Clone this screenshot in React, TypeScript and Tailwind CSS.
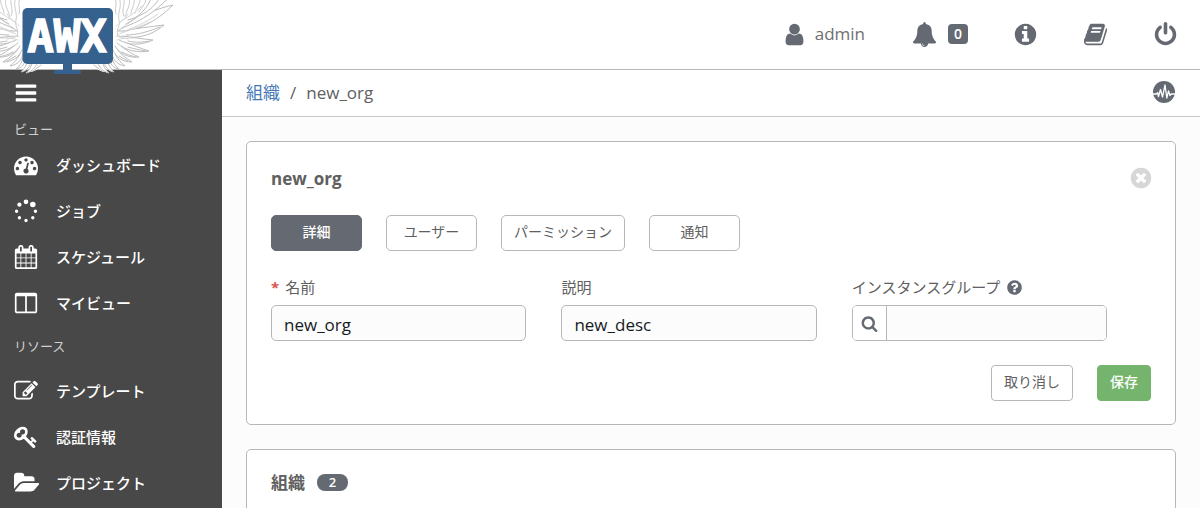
import { useState } from 'react';
import type { ReactNode } from 'react';

interface IconProps {
  className: string;
  name: keyof typeof ICONS;
}

const CIRCLE =
  'm0 0q0 209-103 385.5t-279.5 279.5-385.5 103-385.5-103-279.5-279.5-103-385.5 103-385.5 279.5-279.5 385.5-103 385.5 103 279.5 279.5 103 385.5z';

const ICONS = {
  bars: 'M192 256h1408q64 0 64 64v128q0 64-64 64h-1408q-64 0-64-64v-128q0-64 64-64zM192 768h1408q64 0 64 64v128q0 64-64 64h-1408q-64 0-64-64v-128q0-64 64-64zM192 1280h1408q64 0 64 64v128q0 64-64 64h-1408q-64 0-64-64v-128q0-64 64-64z',
  user: 'M1536 1399q0 109-62.5 187t-150.5 78h-854q-88 0-150.5-78t-62.5-187q0-85 8.5-160.5t31.5-152 58.5-131 94-89 134.5-34.5q131 128 313 128t313-128q76 0 134.5 34.5t94 89 58.5 131 31.5 152 8.5 160.5zm-256-887q0 159-112.5 271.5t-271.5 112.5-271.5-112.5-112.5-271.5 112.5-271.5 271.5-112.5 271.5 112.5 112.5 271.5z',
  bell: 'M912 1696q0-16-16-16-59 0-101.5-42.5t-42.5-101.5q0-16-16-16t-16 16q0 73 51.5 124.5t124.5 51.5q16 0 16-16zm816-288q0 52-38 90t-90 38h-448q0 106-75 181t-181 75-181-75-75-181h-448q-52 0-90-38t-38-90q50-42 91-88t85-119.5 74.5-158.5 50-206 19.5-260q0-152 117-282.5t307-158.5q-8-19-8-39 0-40 28-68t68-28 68 28 28 68q0 20-8 39 190 28 307 158.5t117 282.5q0 139 19.5 260t50 206 74.5 158.5 85 119.5 91 88z',
  info:
    'M1152 1376v-160q0-14-9-23t-23-9h-96v-512q0-14-9-23t-23-9h-320q-14 0-23 9t-9 23v160q0 14 9 23t23 9h96v320h-96q-14 0-23 9t-9 23v160q0 14 9 23t23 9h448q14 0 23-9t9-23zm-128-896v-160q0-14-9-23t-23-9h-192q-14 0-23 9t-9 23v160q0 14 9 23t23 9h192q14 0 23-9t9-23zM1664 896' + CIRCLE,
  book: 'M1703 478q40 57 18 129l-275 906q-19 64-76.5 107.5t-122.5 43.5h-923q-77 0-148.5-53.5t-99.5-131.5q-24-67-2-127 0-4 3-27t4-37q1-8-3-21.5t-3-19.5q2-11 8-21t16.5-23.5 16.5-23.5q23-38 45-91.5t30-91.5q3-10 .5-30t-.5-28q3-11 17-28t17-23q21-36 42-92t25-90q1-9-2.5-32t.5-28q4-13 22-30.5t22-22.5q19-26 42.5-84.5t27.5-96.5q1-8-3-25.5t-2-26.5q2-8 9-18t18-23 17-21q8-12 16.5-30.5t15-35 16-36 19.5-32 26.5-23.5 36-11.5 47.5 5.5l-1 3q38-9 51-9h761q74 0 114 56t18 130l-274 906q-36 119-71.5 153.5t-128.5 34.5h-869q-27 0-38 15-11 16-1 43 24 70 144 70h923q29 0 56-15.5t35-41.5l300-987q7-22 5-57 38 15 59 43zm-1064 2q-4 13 2 22.5t20 9.5h608q13 0 25.5-9.5t16.5-22.5l21-64q4-13-2-22.5t-20-9.5h-608q-13 0-25.5 9.5t-16.5 22.5zm-83 256q-4 13 2 22.5t20 9.5h608q13 0 25.5-9.5t16.5-22.5l21-64q4-13-2-22.5t-20-9.5h-608q-13 0-25.5 9.5t-16.5 22.5z',
  power:
    'M1664 896q0 156-61 298t-164 245-245 164-298 61-298-61-245-164-164-245-61-298q0-182 80.5-343t226.5-270q43-32 95.5-25t83.5 50q32 42 24.5 94.5t-49.5 84.5q-98 74-151.5 181t-53.5 228q0 104 40.5 198.5t109.5 163.5 163.5 109.5 198.5 40.5 198.5-40.5 163.5-109.5 109.5-163.5 40.5-198.5q0-121-53.5-228t-151.5-181q-42-32-49.5-84.5t24.5-94.5q31-43 84-50t95 25q146 109 226.5 270t80.5 343zm-640-768v640q0 52-38 90t-90 38-90-38-38-90v-640q0-52 38-90t90-38 90 38 38 90z',
  dashboard:
    'M384 1152q0-53-37.5-90.5t-90.5-37.5-90.5 37.5-37.5 90.5 37.5 90.5 90.5 37.5 90.5-37.5 37.5-90.5zm192-448q0-53-37.5-90.5t-90.5-37.5-90.5 37.5-37.5 90.5 37.5 90.5 90.5 37.5 90.5-37.5 37.5-90.5zm428 481l101-382q6-26-7.5-48.5t-38.5-29.5-48 6.5-30 39.5l-101 382q-60 5-107 43.5t-63 98.5q-20 77 20 146t117 89 146-20 89-117q16-60-6-117t-72-91zm660-33q0-53-37.5-90.5t-90.5-37.5-90.5 37.5-37.5 90.5 37.5 90.5 90.5 37.5 90.5-37.5 37.5-90.5zm-640-640q0-53-37.5-90.5t-90.5-37.5-90.5 37.5-37.5 90.5 37.5 90.5 90.5 37.5 90.5-37.5 37.5-90.5zm448 192q0-53-37.5-90.5t-90.5-37.5-90.5 37.5-37.5 90.5 37.5 90.5 90.5 37.5 90.5-37.5 37.5-90.5zm320 448q0 261-141 483-19 29-54 29h-1402q-35 0-54-29-141-221-141-483 0-182 71-348t191-286 286-191 348-71 348 71 286 191 191 286 71 348z',
  spinner:
    'M896 32a176 176 0 1 0 0 352a176 176 0 1 0 0-352zM1404 196a208 208 0 1 0 0 416a208 208 0 1 0 0-416zM404 260a160 160 0 1 0 0 320a160 160 0 1 0 0-320zM192 784a128 128 0 1 0 0 256a128 128 0 1 0 0-256zM1600 784a128 128 0 1 0 0 256a128 128 0 1 0 0-256zM404 1276a128 128 0 1 0 0 256a128 128 0 1 0 0-256zM1404 1276a128 128 0 1 0 0 256a128 128 0 1 0 0-256zM896 1480a128 128 0 1 0 0 256a128 128 0 1 0 0-256z',
  calendar:
    'M192 1664h288v-288h-288v288zm352 0h320v-288h-320v288zm-352-352h288v-320h-288v320zm352 0h320v-320h-320v320zm-352-384h288v-288h-288v288zm736 736h320v-288h-320v288zm-384-736h320v-288h-320v288zm768 736h288v-288h-288v288zm-384-352h320v-320h-320v320zm-352-864v-288q0-13-9.5-22.5t-22.5-9.5h-64q-13 0-22.5 9.5t-9.5 22.5v288q0 13 9.5 22.5t22.5 9.5h64q13 0 22.5-9.5t9.5-22.5zm736 864h288v-320h-288v320zm-384-384h320v-288h-320v288zm384 0h288v-288h-288v288zm32-480v-288q0-13-9.5-22.5t-22.5-9.5h-64q-13 0-22.5 9.5t-9.5 22.5v288q0 13 9.5 22.5t22.5 9.5h64q13 0 22.5-9.5t9.5-22.5zm384-64v1280q0 52-38 90t-90 38h-1408q-52 0-90-38t-38-90v-1280q0-52 38-90t90-38h128v-96q0-66 47-113t113-47h64q66 0 113 47t47 113v96h384v-96q0-66 47-113t113-47h64q66 0 113 47t47 113v96h128q52 0 90 38t38 90z',
  columns:
    'M224 1536h608v-1152h-640v1120q0 13 9.5 22.5t22.5 9.5zm1376-32v-1120h-640v1152h608q13 0 22.5-9.5t9.5-22.5zm128-1216v1216q0 66-47 113t-113 47h-1344q-66 0-113-47t-47-113v-1216q0-66 47-113t113-47h1344q66 0 113 47t47 113z',
  edit: 'M888 1184l116-116-152-152-116 116v56h96v96h56zm440-720q-16-16-33 1l-350 350q-17 17-1 33t33-1l350-350q17-17 1-33zm80 594v190q0 119-84.5 203.5t-203.5 84.5h-832q-119 0-203.5-84.5t-84.5-203.5v-832q0-119 84.5-203.5t203.5-84.5h832q63 0 117 25 15 7 18 23 3 17-9 29l-49 49q-14 14-32 8-23-6-45-6h-832q-66 0-113 47t-47 113v832q0 66 47 113t113 47h832q66 0 113-47t47-113v-126q0-13 9-22l64-64q15-15 35-7t20 29zm-96-738l288 288-672 672h-288v-288zm444 132l-92 92-288-288 92-92q28-28 68-28t68 28l152 152q28 28 28 68t-28 68z',
  key: 'M832 512q0-80-56-136t-136-56-136 56-56 136q0 42 19 83-41-19-83-19-80 0-136 56t-56 136 56 136 136 56 136-56 56-136q0-42-19-83 41 19 83 19 80 0 136-56t56-136zm851 704q0 17-49 66t-66 49q-9 0-28.5-16t-36.5-33-38.5-40-24.5-26l-96 96 220 220q28 28 28 68 0 42-39 81t-81 39q-40 0-68-28l-671-671q-176 131-365 131-163 0-265.5-102.5t-102.5-265.5q0-160 95-313t248-248 313-95q163 0 265.5 102.5t102.5 265.5q0 189-131 365l355 355 96-96q-3-3-26-24.5t-40-38.5-33-36.5-16-28.5q0-17 49-66t66-49q13 0 23 10 6 6 46 44.5t82 79.5 86.5 86 73 78 28.5 41z',
  folder:
    'M1879 952q0 31-31 66l-336 396q-43 51-120.5 86.5t-143.5 35.5h-1088q-34 0-60.5-13t-26.5-43q0-31 31-66l336-396q43-51 120.5-86.5t143.5-35.5h1088q34 0 60.5 13t26.5 43zm-343-344v160h-832q-94 0-197 47.5t-164 119.5l-337 396-5 6q0-4-.5-12.5t-.5-12.5v-960q0-92 66-158t158-66h320q92 0 158 66t66 158v32h544q92 0 158 66t66 158z',
  search:
    'M1216 832q0-185-131.5-316.5t-316.5-131.5-316.5 131.5-131.5 316.5 131.5 316.5 316.5 131.5 316.5-131.5 131.5-316.5zm512 832q0 52-38 90t-90 38q-54 0-90-38l-343-342q-179 124-399 124-143 0-273.5-55.5t-225-150-150-225-55.5-273.5 55.5-273.5 150-225 225-150 273.5-55.5 273.5 55.5 225 150 150 225 55.5 273.5q0 220-124 399l343 343q37 37 37 90z',
  question:
    'M1024 1376v-192q0-14-9-23t-23-9h-192q-14 0-23 9t-9 23v192q0 14 9 23t23 9h192q14 0 23-9t9-23zm256-672q0-88-55.5-163t-138.5-116-170-41q-243 0-371 213-15 24 8 42l132 100q7 6 19 6 16 0 25-12 53-68 86-92 34-24 86-24 48 0 85.5 26t37.5 59q0 38-20 61t-68 45q-63 28-115.5 86.5t-52.5 125.5v36q0 14 9 23t23 9h192q14 0 23-9t9-23q0-19 21.5-49.5t54.5-49.5q32-18 49-28.5t46-35 44.5-48 28-60.5 12.5-81zM1664 896' + CIRCLE,
  close:
    'M1277 1122q0-26-19-45l-181-181 181-181q19-19 19-45 0-27-19-46l-90-90q-19-19-46-19-26 0-45 19l-181 181-181-181q-19-19-45-19-27 0-46 19l-90 90q-19 19-19 46 0 26 19 45l181 181-181 181q-19 19-19 45 0 27 19 46l90 90q19 19 46 19 26 0 45-19l181-181 181 181q19 19 45 19 27 0 46-19l90-90q19-19 19-46zM1664 896' + CIRCLE,
};

function Icon({ className, name }: IconProps) {
  return (
    <svg viewBox="0 0 1792 1792" className={`shrink-0 overflow-visible fill-current ${className}`} fillRule="evenodd" aria-hidden="true">
      <path d={ICONS[name]} />
    </svg>
  );
}

// One wing, drawn on the right of the screen and mirrored for the left.
function Wing() {
  return (
    <g fill="#fff" stroke="#bdbdbd" strokeWidth="1" strokeLinejoin="round" strokeLinecap="round">
      <path d="M114 44C104 54 98 62 94 67C98 70 102 72 106 72L103 67L112 72L108 66L117 69L113 62L124 65L117 57L132 61L122 53L141 57L128 48L150 52L132 42L152 40L138 37L164 25L142 29C158 22 168 14 173 5L150 14L166-4L118-4Z" stroke="none" />
      <path d="M118 31C136 32 156 22 173 5C160 8 146 13 134 20C128 24 122 28 118 31" />
      <path d="M122 28C138 22 154 14 170-4M128 20C142 16 156 8 160-4M126 24C140 16 148 8 152-4" />
      <path d="M118 36C134 40 152 36 164 25C150 27 136 28 124 31M126 35C138 35 150 31 160 27" />
      <path d="M119 40C130 46 142 45 153 40C142 39 132 37 122 36M128 41C136 43 144 42 150 41" />
      <path d="M117 43C126 51 138 53 149 51C140 48 132 45 124 42M128 47C134 49 140 50 146 51" />
      <path d="M115 46C120 54 128 58 139 57C132 54 126 50 121 46M122 52C128 55 132 56 136 57" />
      <path d="M113 50C116 57 122 62 132 62C126 58 120 54 117 49M119 56L128 61" />
      <path d="M112 54C113 60 118 65 125 66C120 62 117 58 115 54M110 59C110 64 113 68 119 69C115 66 113 62 112 58" />
      <path d="M104 63C106 68 109 71 114 72C111 69 109 66 108 63M98 64C101 69 104 72 109 73C106 70 104 67 103 64M94 65L102 71" />
      <path d="M115-2C118 4 114 8 116 14M119-2C123 6 117 12 119 20C121 26 115 30 118 36M124-2C125 6 121 10 124 16M129-2C132 6 124 12 126 18M134-2C136 4 130 10 131 15M140-2C141 4 136 8 135 13M146-2C146 4 141 8 139 12" stroke="#cccccc" />
      <path d="M120 22C126 18 134 14 142 6M122 32C132 28 144 24 158 14M119 34C130 30 142 26 150 22M116 26C120 22 124 20 128 14M117 40C122 38 128 38 134 38M116 36L128 39" stroke="#d6d6d6" />
    </g>
  );
}

function Logo() {
  return (
    <svg viewBox="0 0 176 70" className="block h-[70px] w-44 overflow-visible" role="img" aria-label="AWX">
      <g transform="translate(135 0) scale(-1 1)">
        <Wing />
      </g>
      <Wing />
      <rect x="63" y="60" width="9" height="12" fill="#35618e" />
      <rect x="54" y="70" width="27" height="4" rx="1.5" fill="#35618e" />
      <rect x="22.5" y="8" width="90.5" height="56" rx="5" fill="#35618e" />
      <text
        x="67"
        y="52"
        textAnchor="middle"
        fill="#fff"
        stroke="#fff"
        strokeWidth="1.5"
        fontSize="44"
        fontWeight="700"
        fontFamily='"DejaVu Sans Mono", monospace'
      >
        AWX
      </text>
    </svg>
  );
}

function ActivityIcon() {
  return (
    <svg viewBox="0 0 22 22" className="h-[22px] w-[22px]" aria-hidden="true">
      <circle cx="11" cy="11" r="11" fill="#646972" />
      <path
        d="M0 13H3.5L4.5 11.5L5.5 15.5L7.5 8.5L9.5 16L12 4L13.8 17L15.5 10L17 14.5L18.2 13H22"
        fill="none"
        stroke="#fff"
        strokeWidth="1.3"
        strokeLinejoin="round"
      />
    </svg>
  );
}

interface NavItem {
  icon: keyof typeof ICONS;
  label: string;
}

const VIEW_ITEMS: NavItem[] = [
  { icon: 'dashboard', label: 'ダッシュボード' },
  { icon: 'spinner', label: 'ジョブ' },
  { icon: 'calendar', label: 'スケジュール' },
  { icon: 'columns', label: 'マイビュー' },
];

const RESOURCE_ITEMS: NavItem[] = [
  { icon: 'edit', label: 'テンプレート' },
  { icon: 'key', label: '認証情報' },
  { icon: 'folder', label: 'プロジェクト' },
];

function NavSection({ title, titleClass, items }: { title: string; titleClass: string; items: NavItem[] }) {
  return (
    <section>
      <h2 className={`flex items-center text-[13px] text-[#d0d0d0] ${titleClass}`}>{title}</h2>
      <ul>
        {items.map(item => (
          <li key={item.label}>
            <a href="#" className="flex h-[46px] items-center gap-[18px] text-[15px] font-medium text-white">
              <Icon name={item.icon} className="h-6 w-6" />
              {item.label}
            </a>
          </li>
        ))}
      </ul>
    </section>
  );
}

const TABS = ['詳細', 'ユーザー', 'パーミッション', '通知'];

const inputClass =
  'h-9 w-full min-w-0 rounded-[5px] border border-[#b7b7b7] bg-[#fcfcfc] px-3 pt-0.5 text-[17px] text-[#161b1f] outline-none';

function Field({ id, label, children }: { id: string; label: ReactNode; children: ReactNode }) {
  return (
    <div className="w-[33%] pr-[35px]">
      <label htmlFor={id} className="mb-1.5 flex h-6 items-center text-[15px]">
        {label}
      </label>
      {children}
    </div>
  );
}

export default function App() {
  const [activeTab, setActiveTab] = useState(TABS[0]);
  const [name, setName] = useState('new_org');
  const [description, setDescription] = useState('new_desc');

  return (
    <div className="flex h-screen flex-col overflow-hidden bg-[#fcfcfc] font-['Open_Sans','Noto_Sans_CJK_JP',sans-serif] text-[#606060]">
      <header className="relative z-10 flex h-[70px] shrink-0 justify-between border-b border-[#b7b7b7] bg-white">
        <a href="#">
          <Logo />
        </a>
        <nav className="flex items-center pr-[22px] pb-px text-[#646972]">
          <a href="#" className="flex items-center gap-2 text-[17px]">
            <Icon name="user" className="h-[25px] w-[25px]" />
            <span className="text-[#707070]">admin</span>
          </a>
          <button type="button" aria-label="通知" className="ml-[47px] flex items-center gap-[11px]">
            <Icon name="bell" className="h-[25px] w-[25px]" />
            <span className="flex h-5 w-5 items-center justify-center rounded bg-[#646972] text-sm font-semibold text-white">0</span>
          </button>
          <button type="button" aria-label="情報" className="ml-[45px]">
            <Icon name="info" className="h-[25px] w-[25px]" />
          </button>
          <button type="button" aria-label="ドキュメント" className="ml-[45px]">
            <Icon name="book" className="h-[25px] w-[25px]" />
          </button>
          <button type="button" aria-label="ログアウト" className="ml-[45px]">
            <Icon name="power" className="h-[25px] w-[25px]" />
          </button>
        </nav>
      </header>

      <div className="flex min-h-0 flex-1">
        <aside className="w-[222px] shrink-0 bg-[#484848] pl-3.5">
          <button type="button" aria-label="メニュー" className="flex h-12 items-center pb-0.5 text-white">
            <Icon name="bars" className="h-6 w-6" />
          </button>
          <NavSection title="ビュー" titleClass="h-6" items={VIEW_ITEMS} />
          <NavSection title="リソース" titleClass="h-[42px]" items={RESOURCE_ITEMS} />
        </aside>

        <div className="min-w-0 flex-1">
          <div className="flex h-[47px] items-center justify-between border-b border-[#c8c8c8] bg-white pr-[25px] pl-6 text-[17px]">
            <div className="flex gap-2.5">
              <a href="#" className="text-[#4679b5]">
                組織
              </a>
              <span>/</span>
              <span>new_org</span>
            </div>
            <button type="button" aria-label="アクティビティーストリーム" className="pb-0.5">
              <ActivityIcon />
            </button>
          </div>

          <main className="flex flex-col gap-6 p-6">
            <section className="rounded-[5px] border border-[#b7b7b7] bg-white px-6 pt-[25px] pb-[23px]">
              <div className="flex h-6 items-center justify-between">
                <h1 className="text-[17px] font-bold">new_org</h1>
                <button type="button" aria-label="閉じる" className="-mr-0.5 pb-0.5 text-[#d7d7d7]">
                  <Icon name="close" className="h-6 w-6" />
                </button>
              </div>

              <div className="mt-6 flex gap-6 text-sm">
                {TABS.map(tab => (
                  <button
                    key={tab}
                    type="button"
                    onClick={() => setActiveTab(tab)}
                    className={
                      tab === activeTab
                        ? 'h-9 min-w-[91px] rounded-[5px] border border-[#646972] bg-[#646972] px-3 pb-0.5 font-medium text-white'
                        : 'h-9 min-w-[91px] rounded-[5px] border border-[#b7b7b7] bg-white px-3 pb-0.5'
                    }
                  >
                    {tab}
                  </button>
                ))}
              </div>

              <form onSubmit={event => event.preventDefault()}>
                <div className="mt-6 flex">
                  <Field
                    id="name"
                    label={
                      <>
                        <span className="mr-1.5 font-bold text-[#d9534f]">*</span>
                        名前
                      </>
                    }
                  >
                    <input id="name" type="text" value={name} onChange={event => setName(event.target.value)} className={inputClass} />
                  </Field>
                  <Field id="description" label="説明">
                    <input
                      id="description"
                      type="text"
                      value={description}
                      onChange={event => setDescription(event.target.value)}
                      className={inputClass}
                    />
                  </Field>
                  <Field
                    id="instance-groups"
                    label={
                      <>
                        インスタンスグループ
                        <Icon name="question" className="ml-1.5 h-[17px] w-[17px] text-[#646972]" />
                      </>
                    }
                  >
                    <div className="flex h-9 overflow-hidden rounded-[5px] border border-[#b7b7b7]">
                      <button
                        type="button"
                        aria-label="検索"
                        className="flex w-[34px] shrink-0 items-center justify-center border-r border-[#b7b7b7] bg-white text-[#646972]"
                      >
                        <Icon name="search" className="h-[17px] w-[17px]" />
                      </button>
                      <input id="instance-groups" type="text" className="w-full min-w-0 bg-[#fcfcfc] px-3 text-[17px] outline-none" />
                    </div>
                  </Field>
                </div>

                <div className="mt-6 flex justify-end gap-6 text-sm">
                  <button type="button" className="h-9 rounded border border-[#b7b7b7] bg-white px-3 pb-0.5">
                    取り消し
                  </button>
                  <button type="submit" className="h-9 rounded border border-[#75b46c] bg-[#75b46c] px-3 pb-0.5 font-medium text-white">
                    保存
                  </button>
                </div>
              </form>
            </section>

            <section className="flex h-40 items-start gap-3 rounded-[5px] border border-[#b7b7b7] bg-white px-6 pt-[21px]">
              <h2 className="text-[17px] leading-6 font-bold">組織</h2>
              <span className="mt-[3px] flex h-[17px] w-[31px] items-center justify-center rounded-lg bg-[#646972] text-[13px] font-semibold text-white">2</span>
            </section>
          </main>
        </div>
      </div>
    </div>
  );
}
